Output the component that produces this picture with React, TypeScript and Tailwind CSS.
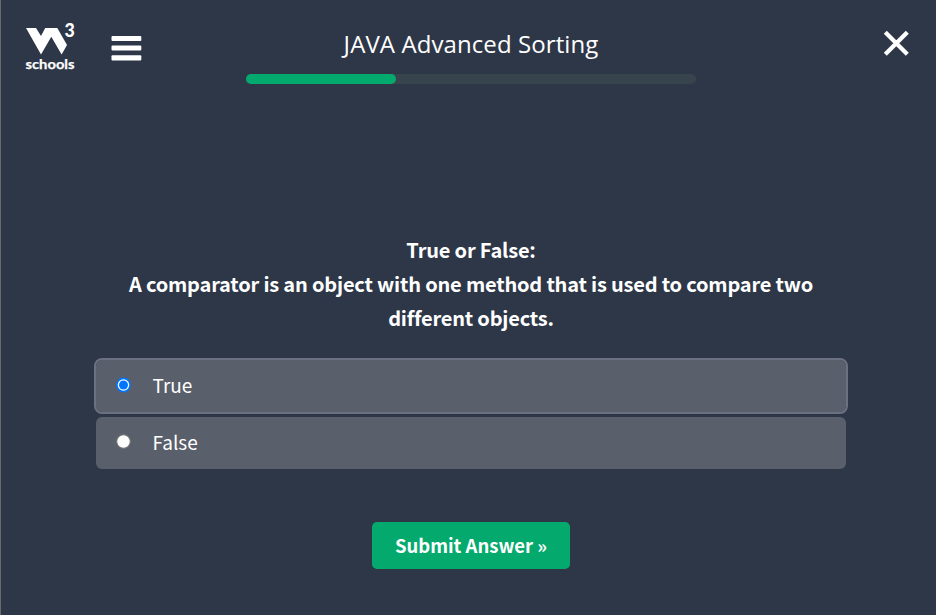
import { useState } from "react";

const sourceSans = "font-['Noto_Sans_CJK_SC',sans-serif]";

function Logo() {
  return (
    <svg width="52" height="52" viewBox="24 20 52 52" className="block" fill="#fff" aria-label="W3Schools">
      <path d="M26 28H36L41 36L45.2 28H57.3L67 45L61.6 54.6L51.3 36.7L41 54.6Z" />
      <text x="64.5" y="37" fontSize="18.5" fontWeight="900" fontFamily="Lato, sans-serif" textLength="10.3" lengthAdjust="spacingAndGlyphs">3</text>
      <text x="25.5" y="69" fontSize="14" fontWeight="700" fontFamily="Lato, sans-serif" stroke="#fff" strokeWidth="0.25" textLength="49" lengthAdjust="spacingAndGlyphs">schools</text>
    </svg>
  );
}

function Radio({ checked }: { checked: boolean }) {
  return (
    <svg width="16" height="16" viewBox="0 0 16 16" className="mb-[2px] block shrink-0">
      {checked ? (
        <>
          <circle cx="8.5" cy="8" r="6.6" fill="#fff" stroke="#0075ff" strokeWidth="1.6" />
          <circle cx="8.5" cy="8" r="4.5" fill="#0075ff" />
        </>
      ) : (
        <circle cx="8.5" cy="7.5" r="6.8" fill="#fff" stroke="#767676" strokeWidth="1.1" />
      )}
    </svg>
  );
}

export default function App() {
  const [answer, setAnswer] = useState("True");
  return (
    <div className="h-[615px] w-full overflow-hidden border-l border-[#6b6b6b] bg-[#2e3748] text-white">
      <header className="flex h-[94px] items-start justify-between pr-[26px] pl-[23px] pt-5">
        <div className="flex w-[222px] items-start gap-[35px]">
          <Logo />
          <button aria-label="Menu" className="mt-4 block">
            <svg width="31" height="26" viewBox="0 0 31 26" fill="#fff" className="block">
              <rect x="0.5" y="0" width="29.8" height="5" rx="1" />
              <rect x="0.5" y="9.4" width="29.8" height="5.2" rx="1" />
              <rect x="0.5" y="19.2" width="29.8" height="5.3" rx="1" />
            </svg>
          </button>
        </div>
        <div className="flex w-[450px] flex-col items-center">
          <h1 className="h-[54px] whitespace-nowrap font-['Open_Sans',sans-serif] text-[24px] leading-[48px] tracking-[0.09px]">JAVA Advanced Sorting</h1>
          <div className="h-[10px] w-[450px] rounded-full bg-[#38444d]">
            <div className="h-full w-1/3 rounded-full bg-[#04aa6d]" />
          </div>
        </div>
        <div className="flex w-[214px] justify-end pt-[10px]">
          <svg width="27" height="27" viewBox="0 0 27 27" stroke="#fff" strokeWidth="4.2">
            <path d="M2.3 2.3L24.3 24.3M24.3 2.3L2.3 24.3" />
          </svg>
        </div>
      </header>
      <main className={`ml-[93px] flex w-[754px] flex-col items-center pt-[139px] ${sourceSans}`}>
        <h2 className="whitespace-nowrap text-center text-[20px] font-bold leading-[34px] tracking-[-0.19px]">
          True or False:
          <br />
          A comparator is an object with one method that is used to compare two
          <br />
          different objects.
        </h2>
        <div className="mt-[23px] flex w-full flex-col gap-[1px]">
          {["True", "False"].map((option) => (
            <button
              key={option}
              onClick={() => setAnswer(option)}
              className={`flex h-14 w-full items-center rounded-lg border-2 bg-[#595f6b] bg-clip-padding pl-[19px] text-left text-[19px] ${
                answer === option ? "border-[#6b7180]" : "border-transparent"
              }`}
            >
              <Radio checked={answer === option} />
              <span className="mb-[2px] ml-[21.5px]">{option}</span>
            </button>
          ))}
        </div>
        <button className="mt-[51px] h-[47px] w-[198px] rounded-[5px] bg-[#04aa6d] text-[18.5px] font-bold">Submit Answer »</button>
      </main>
    </div>
  );
}
